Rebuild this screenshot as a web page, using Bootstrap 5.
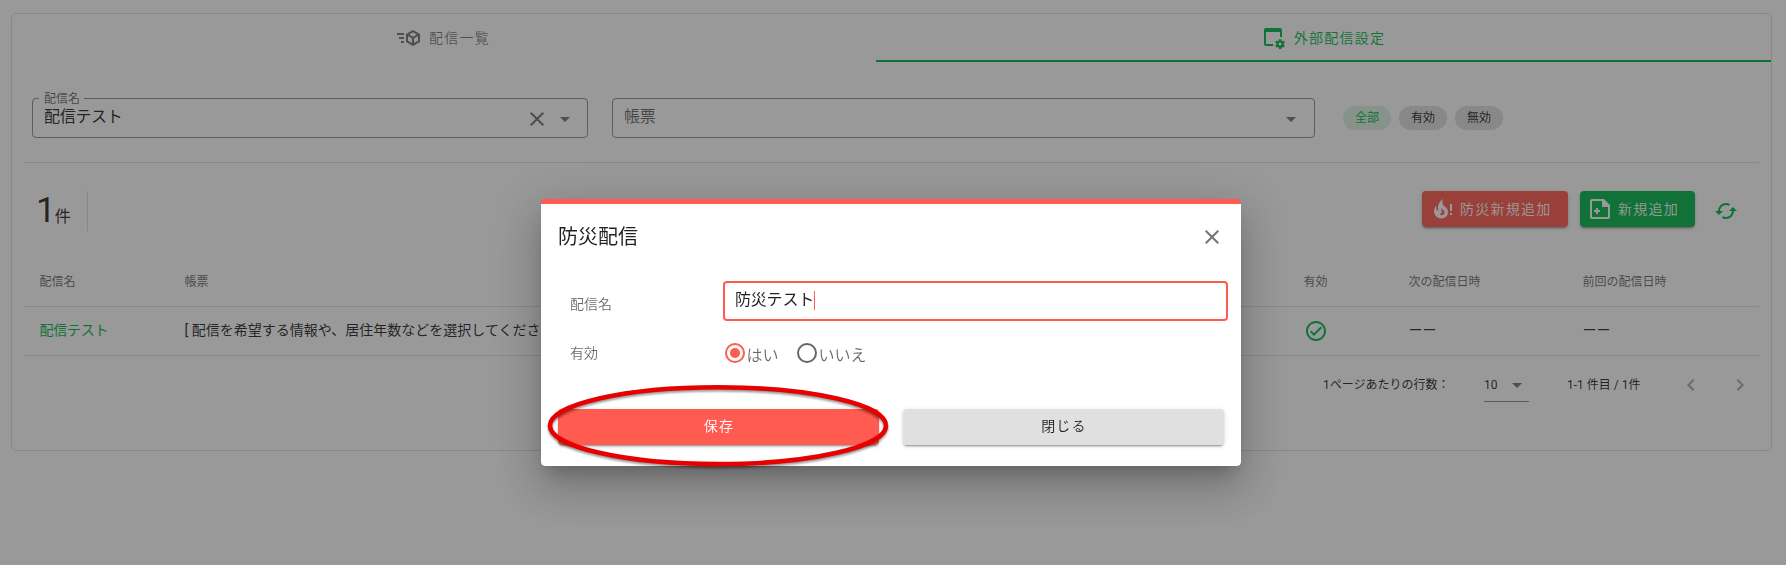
<!DOCTYPE html>
<html lang="ja">
<head>
<meta charset="utf-8">
<meta name="viewport" content="width=device-width, initial-scale=1">
<title>外部配信設定</title>
<link rel="stylesheet" href="https://cdn.jsdelivr.net/npm/bootstrap@5.3.0/dist/css/bootstrap.min.css">
<style>
:root{--green:#02b748;--red:#ff5b50;--ink:rgba(0,0,0,.87);--dim:rgba(0,0,0,.6);--line:rgba(0,0,0,.12)}
body{font-family:Roboto,"Noto Sans CJK JP",sans-serif;font-weight:400;color:var(--ink);font-size:14px;line-height:20px;overflow:hidden;background:#fff}
.jp-light{font-family:Roboto,"Noto Sans CJK JP",sans-serif;font-weight:350}
svg.ico{width:24px;height:24px;fill:currentColor;flex:none;display:block}
.panel{margin:13px 14px 0 11px;height:438px;border:1px solid #e0e0e0;border-radius:5px}
.tab-strip{height:48px}
.tab-item{gap:8px;letter-spacing:1.25px;color:rgba(0,0,0,.54)}
.tab-item.first{width:863px}
.tab-item.on{color:var(--green);border-bottom:2px solid var(--green);padding-top:2px;margin-left:1px}
.panel-inner{padding:0 12px 0 12px}
.filters{height:101px;padding:36px 0 0 8px;border-bottom:1px solid #e2e2e2}
.field{height:40px;border:1px solid rgba(0,0,0,.44);border-radius:4px;font-size:16px;line-height:24px;padding:0 10px 2px 11px}
.field>span{letter-spacing:-.3px}
.field legend{top:-9px;left:6px;padding:0 4px 0 5px;background:#fff;font-size:12px;line-height:18px;width:auto;color:var(--dim)}
.pill{width:48px;height:24px;border-radius:12px;background:#e0e0e0;font-size:12px;line-height:24px;text-align:center}
.pill.on{background:#dcf3e3;color:var(--green)}
.toolbar{height:91px;padding:28px 21px 0 12px}
.tally{height:40px;width:52px;border-right:1px solid #dedede}
.tally b{font-size:35px;font-weight:400;line-height:40px}
.tally span{font-size:16px;margin-left:-1px}
.act{height:36px;border-radius:4px;color:#fff;letter-spacing:1.25px;gap:8px;padding:0 0 1px 10px;box-shadow:0 3px 1px -2px rgba(0,0,0,.2),0 2px 2px 0 rgba(0,0,0,.14),0 1px 5px 0 rgba(0,0,0,.12)}
.bg-r{background:var(--red)}.bg-g{background:var(--green)}
.tx-g{color:var(--green)}
.grid-row{display:grid;grid-template-columns:145px 1119px 105px 174px 1fr;padding-left:15.6px;border-bottom:1px solid #e2e2e2;align-items:center}
.grid-head{height:53px;font-size:12px;color:var(--dim);padding-top:3px}
.grid-body{height:49px;padding-bottom:3px}
.grid-body .name{letter-spacing:-.25px}
.pager{height:58px;font-size:12px}
.rows-sel{width:45px;height:33px;border-bottom:1px solid rgba(0,0,0,.45)}
.modal-backdrop{background:#212121}.modal-backdrop.show{opacity:.46}
.modal-dialog{width:700px;max-width:700px;margin:199px 0 0 541px}
.modal-content{height:267px;border:0;border-top:5px solid var(--red);border-radius:4px;padding:0 17px;color:var(--ink);box-shadow:0 11px 15px -7px rgba(0,0,0,.2),0 24px 38px 3px rgba(0,0,0,.14),0 9px 46px 8px rgba(0,0,0,.12)}
.modal-content::before{content:"";display:block;position:absolute;inset:0 0 auto 0;height:5px;border-radius:4px 4px 0 0;background:#fff}
.ttl{font-size:20px;line-height:28px}
.form-line{padding-left:12px;color:var(--dim)}
.form-line>label{width:153px}
.txt-in{width:505px;height:40px;border:2px solid var(--red);border-radius:4px;font-size:16px;color:var(--ink);padding:0 9px 2px 10px;margin-right:-4px;letter-spacing:-.2px}
.caret-bar{width:1px;height:19px;background:var(--red)}
.rad{font-size:16px}
.wide{width:321px;height:36px;padding:0 0 2px 1px;justify-content:center}
.ring{position:absolute;left:1px;top:176px;width:352px;height:98px;filter:drop-shadow(0 2px 1px rgba(0,0,0,.4))}
</style>
</head>
<body>
<main class="panel">
  <nav class="tab-strip d-flex">
    <a class="tab-item first jp-light d-flex align-items-center justify-content-center text-decoration-none"><svg class="ico" viewBox="0 0 24 24"><path d="M16,4L9,8.04V15.96L16,20L23,15.96V8.04M16,6.31L19.8,8.5L16,10.69L12.21,8.5M0,7V9H7V7M11,10.11L15,12.42V17.11L11,14.81M21,10.11V14.81L17,17.11V12.42M2,11V13H7V11M4,15V17H7V15"/></svg>配信一覧</a>
    <a class="tab-item on jp-light flex-fill d-flex align-items-center justify-content-center text-decoration-none"><svg class="ico" viewBox="0 0 24 24"><path d="M21.7 18.6V17.6L22.8 16.8C22.9 16.7 23 16.6 22.9 16.5L21.9 14.8C21.9 14.7 21.7 14.7 21.6 14.7L20.4 15.2C20.1 15 19.8 14.8 19.5 14.7L19.3 13.4C19.3 13.3 19.2 13.2 19.1 13.2H17.1C16.9 13.2 16.8 13.3 16.8 13.4L16.6 14.7C16.3 14.9 16.1 15 15.8 15.2L14.6 14.7C14.5 14.7 14.4 14.7 14.3 14.8L13.3 16.5C13.3 16.6 13.3 16.7 13.4 16.8L14.5 17.6V18.6L13.4 19.4C13.3 19.5 13.2 19.6 13.3 19.7L14.3 21.4C14.4 21.5 14.5 21.5 14.6 21.5L15.8 21C16 21.2 16.3 21.4 16.6 21.5L16.8 22.8C16.9 22.9 17 23 17.1 23H19.1C19.2 23 19.3 22.9 19.3 22.8L19.5 21.5C19.8 21.3 20 21.2 20.3 21L21.5 21.4C21.6 21.4 21.7 21.4 21.8 21.3L22.8 19.6C22.9 19.5 22.9 19.4 22.8 19.4L21.7 18.6M18 19.5C17.2 19.5 16.5 18.8 16.5 18S17.2 16.5 18 16.5 19.5 17.2 19.5 18 18.8 19.5 18 19.5M11 18H4V6H18V11C18.7 11 19.4 11.1 20 11.3V4C20 2.9 19.1 2 18 2H4C2.9 2 2 2.9 2 4V18C2 19.1 2.9 20 4 20H11.3C11.1 19.4 11 18.7 11 18Z"/></svg>外部配信設定</a>
  </nav>
  <div class="panel-inner">
    <section class="filters d-flex">
      <div class="field position-relative d-flex align-items-center" style="width:556px"><legend class="position-absolute m-0">配信名</legend><span class="me-auto">配信テスト</span><svg class="ico mt-1" viewBox="0 0 24 24" style="color:#757575"><use href="#i-close"/></svg><svg class="ico mt-1 ms-1" viewBox="0 0 24 24" style="color:#757575"><use href="#i-down"/></svg></div>
      <div class="field d-flex align-items-center" style="width:703px;margin-left:24px;padding-right:11px"><span class="me-auto" style="color:rgba(0,0,0,.6)">帳票</span><svg class="ico mt-1" viewBox="0 0 24 24" style="color:#757575"><use href="#i-down"/></svg></div>
      <div class="d-flex gap-2" style="margin:8px 0 0 28px"><span class="pill on">全部</span><span class="pill">有効</span><span class="pill">無効</span></div>
    </section>
    <section class="toolbar d-flex">
      <div class="tally d-flex align-items-baseline me-auto"><b>1</b><span>件</span></div>
      <a class="act bg-r jp-light d-flex align-items-center text-decoration-none" style="width:146px;margin-right:12px"><svg class="ico" viewBox="0 0 22 24" style="width:22px"><use href="#i-fire"/></svg><span style="margin-left:-2px">防災新規追加</span></a>
      <a class="act bg-g jp-light d-flex align-items-center text-decoration-none" style="width:115px;gap:6px;padding-left:8px"><svg class="ico" viewBox="0 0 24 24"><use href="#i-note"/></svg>新規追加</a>
      <svg class="ico tx-g" viewBox="0 0 24 24" style="margin:8px 0 0 19px"><path d="M19,8L15,12H18A6,6 0 0,1 12,18C11,18 10.03,17.75 9.2,17.3L7.74,18.76C8.97,19.54 10.43,20 12,20A8,8 0 0,0 20,12H23M6,12A6,6 0 0,1 12,6C13,6 13.97,6.25 14.8,6.7L16.26,5.24C15.03,4.46 13.57,4 12,4A8,8 0 0,0 4,12H1L5,16L9,12"/></svg>
    </section>
    <section>
      <div class="grid-row grid-head"><span>配信名</span><span>帳票</span><span>有効</span><span>次の配信日時</span><span>前回の配信日時</span></div>
      <div class="grid-row grid-body"><span class="tx-g name">配信テスト</span><span>[ 配信を希望する情報や、居住年数などを選択してください ]</span><svg class="ico tx-g" viewBox="0 0 24 24" style="margin-top:3px"><path d="M12 2C6.5 2 2 6.5 2 12S6.5 22 12 22 22 17.5 22 12 17.5 2 12 2M12 20C7.59 20 4 16.41 4 12S7.59 4 12 4 20 7.59 20 12 16.41 20 12 20M16.59 7.58L10 14.17L7.41 11.59L6 13L10 17L18 9L16.59 7.58Z"/></svg><span>ーー</span><span>ーー</span></div>
      <div class="pager d-flex align-items-center justify-content-end"><span style="width:161px">1ページあたりの行数：</span><div class="rows-sel d-flex align-items-center justify-content-between"><span>10</span><svg class="ico" viewBox="0 0 24 24" style="color:#757575"><use href="#i-down"/></svg></div><span style="margin-left:38px;width:112px">1-1 件目 / 1件</span><svg class="ico" viewBox="0 0 24 24" style="color:#aaa"><path d="M15.41,16.58L10.83,12L15.41,7.41L14,6L8,12L14,18L15.41,16.58Z"/></svg><svg class="ico" viewBox="0 0 24 24" style="color:#aaa;margin:0 7px 0 25px"><path d="M8.59,16.58L13.17,12L8.59,7.41L10,6L16,12L10,18L8.59,16.58Z"/></svg></div>
    </section>
  </div>
</main>

<div class="modal-backdrop show"></div>
<div class="modal d-block" tabindex="-1" role="dialog">
  <div class="modal-dialog">
    <div class="modal-content">
      <header class="d-flex align-items-center justify-content-between position-relative" style="margin-top:19px"><h1 class="ttl fw-normal m-0">防災配信</h1><svg class="ico" viewBox="0 0 24 24" style="color:#757575"><use href="#i-close"/></svg></header>
      <div class="form-line jp-light d-flex" style="margin-top:30px"><label style="padding-top:13px">配信名</label><div class="txt-in fw-normal d-flex align-items-center">防災テスト<i class="caret-bar"></i></div></div>
      <div class="form-line jp-light d-flex align-items-center" style="margin-top:20px;height:24px"><label>有効</label><div class="rad d-flex align-items-center" style="margin-left:-.5px"><svg class="ico" viewBox="0 0 24 24" style="color:var(--red)"><circle cx="12" cy="12" r="5"/><circle cx="12" cy="12" r="9" fill="none" stroke="currentColor" stroke-width="2"/></svg><span style="width:48px;padding-top:5px">はい</span><svg class="ico" viewBox="0 0 24 24"><circle cx="12" cy="12" r="9" fill="none" stroke="currentColor" stroke-width="2"/></svg><span style="padding-top:5px">いいえ</span></div></div>
      <footer class="d-flex justify-content-between" style="margin-top:44px"><a class="act wide bg-r jp-light d-flex align-items-center text-decoration-none">保存</a><a class="act wide jp-light d-flex align-items-center text-decoration-none" style="background:#e0e0e0;color:var(--ink)">閉じる</a></footer>
      <svg class="ring" viewBox="0 0 352 98"><ellipse cx="176" cy="45.7" rx="168" ry="38.4" fill="none" stroke="#e60000" stroke-width="4.6"/></svg>
    </div>
  </div>
</div>

<svg class="d-none"><defs>
  <path id="i-close" d="M19,6.41L17.59,5L12,10.59L6.41,5L5,6.41L10.59,12L5,17.59L6.41,19L12,13.41L17.59,19L19,17.59L13.41,12L19,6.41Z"/>
  <path id="i-down" d="M7,10L12,15L17,10H7Z"/>
  <path id="i-fire" fill-rule="evenodd" d="M14.7 11.2C14.4 10.9 14.2 10.6 13.9 10.4C13.2 9.8 12.5 9.3 11.8 8.7C10.3 7.3 10 4.9 10.9 2C10 2.6 9.2 3.4 8.5 4.3C5.9 6.9 5.5 10.1 6.3 12.5C6.4 13.3 5.6 13.9 5 13.3C4.2 12.3 4 10.5 4.5 8.6C2.8 10 1.9 12.3 2 14.5C2.3 18.4 5.5 21.5 9 21.5C13 21.5 16 18.5 16 15.2C16 13.6 15.5 12.3 14.7 11.2M11.5 17.5C10.2 18.6 8.4 18.2 7.5 17.3C8.7 17 9.4 16.1 9.6 15.2C9.8 14.4 9.5 13.8 9.3 13C9.2 12.3 9.2 11.6 9.5 10.9C10.5 13 12.3 13.2 12.5 15C12.6 16 12.2 16.9 11.5 17.5ZM18 7H20V14H18ZM18 16H20V18H18Z"/>
  <path id="i-note" fill-rule="evenodd" d="M4 2H16L22 8V20Q22 22 20 22H4Q2 22 2 20V4Q2 2 4 2ZM4 4V20H20V10H14V4ZM8 11H10V13H12V15H10V17H8V15H6V13H8Z"/>
</defs></svg>
<script src="https://cdn.jsdelivr.net/npm/bootstrap@5.3.0/dist/js/bootstrap.bundle.min.js"></script>
</body>
</html>
